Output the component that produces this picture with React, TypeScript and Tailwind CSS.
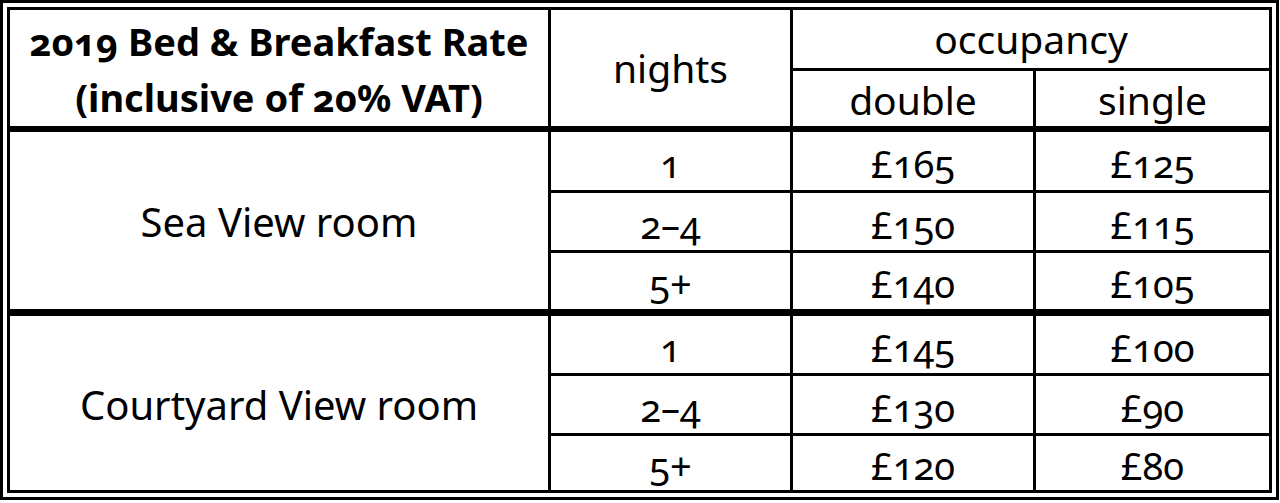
import React from "react";

const font = { fontFamily: '"Noto Sans", "Open Sans", sans-serif' };

type Row = { n: string; d: string; s: string; h: string };

const sea: Row[] = [
  { n: "1", d: "£165", s: "£125", h: "h-[61px]" },
  { n: "2–4", d: "£150", s: "£115", h: "h-[60px]" },
  { n: "5+", d: "£140", s: "£105", h: "flex-1" },
];
const court: Row[] = [
  { n: "1", d: "£145", s: "£100", h: "h-[60px]" },
  { n: "2–4", d: "£130", s: "£90", h: "h-[60px]" },
  { n: "5+", d: "£120", s: "£80", h: "flex-1" },
];

const cell = "flex items-center justify-center text-[38px] leading-[44px] oldstyle-nums pt-[4px]";

function Section({ name, rows, last }: { name: string; rows: Row[]; last?: boolean }) {
  return (
    <div className={`flex min-h-0 ${last ? "flex-1" : "h-[184px] border-b-[7px] border-black"}`}>
      <div className="w-[541px] border-r-[3px] border-black flex items-center justify-center text-[40px] text-black pt-[3px]">
        {name}
      </div>
      <div className="flex-1 flex flex-col min-h-0">
        {rows.map((r, i) => (
          <div
            key={i}
            className={`flex min-h-0 ${r.h} ${i < rows.length - 1 ? "border-b-[3px] border-black" : ""}`}
          >
            <div className={`w-[242px] border-r-[3px] border-black ${cell}`}>{r.n}</div>
            <div className={`w-[243px] border-r-[3px] border-black ${cell}`}>{r.d}</div>
            <div className={`flex-1 ${cell}`}>{r.s}</div>
          </div>
        ))}
      </div>
    </div>
  );
}

export default function App() {
  return (
    <div className="w-[1280px] h-[503px] bg-white" style={font}>
      <div className="w-[1279px] h-[500px] border-[3px] border-black p-[4px] text-black">
        <div className="w-full h-full border-[3px] border-black flex flex-col">
          <div className="flex h-[122px] border-b-[6px] border-black">
            <div className="w-[541px] border-r-[3px] border-black flex flex-col items-center justify-center font-bold text-[38px] leading-[56px] oldstyle-nums pt-[2px]">
              <div>2019 Bed &amp; Breakfast Rate</div>
              <div>(inclusive of 20% VAT)</div>
            </div>
            <div className="w-[242px] border-r-[3px] border-black flex items-center justify-center text-[39px]">
              nights
            </div>
            <div className="flex-1 flex flex-col">
              <div className="h-[61px] border-b-[3px] border-black flex items-center justify-center text-[39px]">
                occupancy
              </div>
              <div className="flex-1 flex">
                <div className="w-[243px] border-r-[3px] border-black flex items-center justify-center text-[39px]">
                  double
                </div>
                <div className="flex-1 flex items-center justify-center text-[39px]">single</div>
              </div>
            </div>
          </div>
          <Section name="Sea View room" rows={sea} />
          <Section name="Courtyard View room" rows={court} last />
        </div>
      </div>
    </div>
  );
}
